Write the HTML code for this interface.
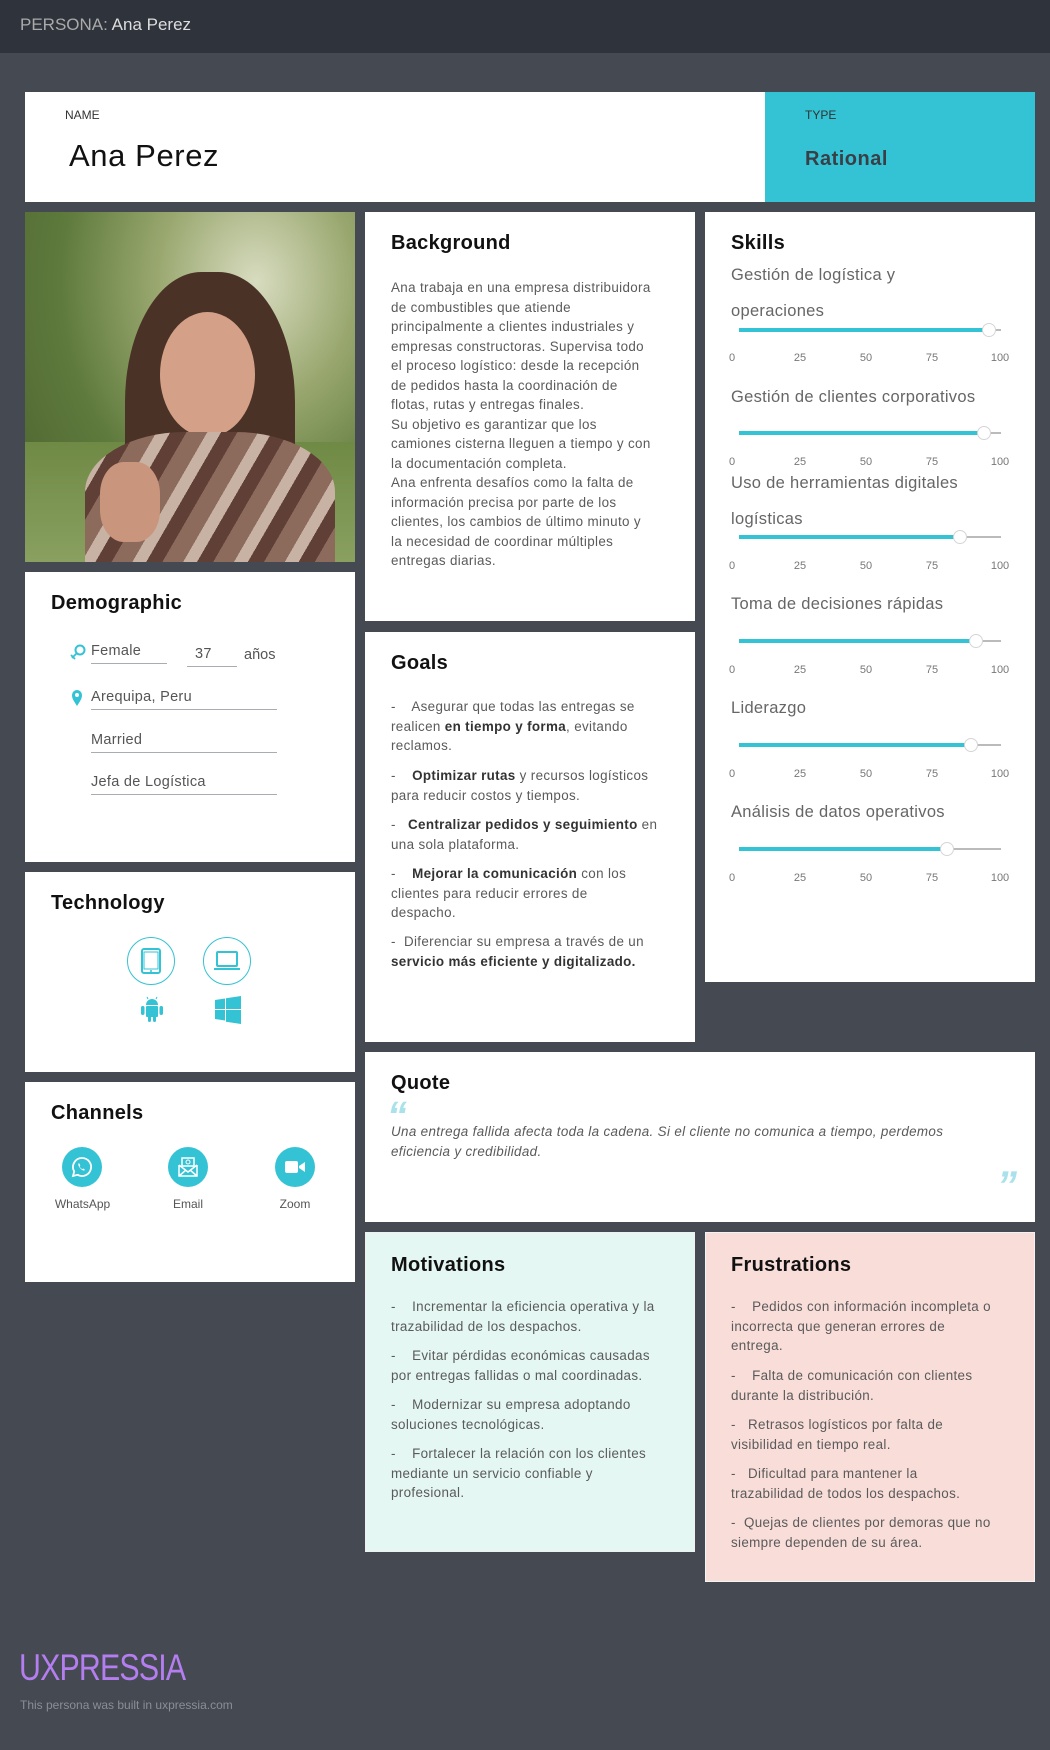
<!DOCTYPE html>
<html><head><meta charset="utf-8"><style>
*{margin:0;padding:0;box-sizing:border-box}
body{width:1050px;height:1750px;background:#454952;font-family:"Liberation Sans",sans-serif;position:relative;overflow:hidden;color:#555}
.a{position:absolute}
.card{position:absolute;background:#fff}
.t{position:absolute;font-size:20px;font-weight:bold;color:#111;left:26px;top:20px;letter-spacing:0.3px}
.p{position:absolute;font-size:13.4px;line-height:19.5px;color:#5a5a5a;letter-spacing:0.35px;white-space:nowrap}
.p b{color:#333}
.sl{position:absolute;font-size:16.5px;color:#666;left:26px;letter-spacing:0.3px}
.bar{position:absolute;left:34px;width:262px;height:2px;background:#bbb}
.bar i{position:absolute;left:0;top:-1px;height:4px;background:#33c3d4}
.bar s{position:absolute;top:-6px;width:14px;height:14px;margin-left:-7px;border-radius:50%;background:#fff;border:1px solid #d5d5d5}
.tk{position:absolute;left:0;width:330px;font-size:11px;color:#777}
.tk span{position:absolute;transform:translateX(-50%)}
.dl{position:absolute;font-size:14.5px;color:#555;border-bottom:1px solid #a9adb3;padding-bottom:4px;letter-spacing:0.3px}
.q{position:absolute;font-size:40px;font-weight:bold;font-style:italic;color:#a9e2ea;line-height:40px}
</style></head><body>
<div class="a" style="left:0;top:0;width:1050px;height:53px;background:#2f333c"></div>
<div class="a" style="left:20px;top:15px;font-size:17px;color:#ddd"><span style="color:#aaa">PERSONA:</span> Ana Perez</div>

<div class="card" style="left:25px;top:92px;width:740px;height:110px"></div>
<div class="a" style="left:765px;top:92px;width:270px;height:110px;background:#33c3d4"></div>
<div class="a" style="left:65px;top:108px;font-size:12px;color:#333">NAME</div>
<div class="a" style="left:69px;top:138px;font-size:31px;color:#111;letter-spacing:0.6px">Ana Perez</div>
<div class="a" style="left:805px;top:108px;font-size:12px;color:#333">TYPE</div>
<div class="a" style="left:805px;top:148px;font-size:20px;font-weight:bold;color:#3a3f47;letter-spacing:0.5px">Rational</div>

<!-- photo -->
<div class="a" style="left:25px;top:212px;width:330px;height:350px;overflow:hidden;background:radial-gradient(ellipse at 70% 20%,#d8dcc0 0,#9aa870 30%,#5e7a3c 60%,#4a5f2e 100%)">
<div class="a" style="left:0;top:230px;width:330px;height:120px;background:linear-gradient(#6f8a45,#89a060)"></div>
<div class="a" style="left:100px;top:60px;width:170px;height:290px;border-radius:45% 45% 20% 20%;background:#4a3226"></div>
<div class="a" style="left:135px;top:100px;width:95px;height:125px;border-radius:50%;background:#d4a088"></div>
<div class="a" style="left:60px;top:220px;width:250px;height:150px;border-radius:40% 40% 0 0;background:repeating-linear-gradient(120deg,#8c6a5c 0 18px,#c7b2a4 18px 30px,#5f3f36 30px 44px)"></div>
<div class="a" style="left:75px;top:250px;width:60px;height:80px;border-radius:40%;background:#c9957c"></div>
</div>

<!-- Background -->
<div class="card" style="left:365px;top:212px;width:330px;height:409px">
<div class="t">Background</div>
<div class="p" style="left:26px;top:66px">Ana trabaja en una empresa distribuidora<br>de combustibles que atiende<br>principalmente a clientes industriales y<br>empresas constructoras. Supervisa todo<br>el proceso logístico: desde la recepción<br>de pedidos hasta la coordinación de<br>flotas, rutas y entregas finales.<br>Su objetivo es garantizar que los<br>camiones cisterna lleguen a tiempo y con<br>la documentación completa.<br>Ana enfrenta desafíos como la falta de<br>información precisa por parte de los<br>clientes, los cambios de último minuto y<br>la necesidad de coordinar múltiples<br>entregas diarias.</div>
</div>

<!-- Skills -->
<div class="card" style="left:705px;top:212px;width:330px;height:770px">
<div class="t">Skills</div>
<div class="sl" style="top:54px">Gestión de logística y</div>
<div class="sl" style="top:90px">operaciones</div>
<div class="bar" style="top:117px"><i style="width:250px"></i><s style="left:250px"></s></div>
<div class="tk" style="top:140px"><span style="left:27px">0</span><span style="left:95px">25</span><span style="left:161px">50</span><span style="left:227px">75</span><span style="left:295px">100</span></div>
<div class="sl" style="top:176px">Gestión de clientes corporativos</div>
<div class="bar" style="top:220px"><i style="width:245px"></i><s style="left:245px"></s></div>
<div class="tk" style="top:244px"><span style="left:27px">0</span><span style="left:95px">25</span><span style="left:161px">50</span><span style="left:227px">75</span><span style="left:295px">100</span></div>
<div class="sl" style="top:262px">Uso de herramientas digitales</div>
<div class="sl" style="top:298px">logísticas</div>
<div class="bar" style="top:324px"><i style="width:221px"></i><s style="left:221px"></s></div>
<div class="tk" style="top:348px"><span style="left:27px">0</span><span style="left:95px">25</span><span style="left:161px">50</span><span style="left:227px">75</span><span style="left:295px">100</span></div>
<div class="sl" style="top:383px">Toma de decisiones rápidas</div>
<div class="bar" style="top:428px"><i style="width:237px"></i><s style="left:237px"></s></div>
<div class="tk" style="top:452px"><span style="left:27px">0</span><span style="left:95px">25</span><span style="left:161px">50</span><span style="left:227px">75</span><span style="left:295px">100</span></div>
<div class="sl" style="top:487px">Liderazgo</div>
<div class="bar" style="top:532px"><i style="width:232px"></i><s style="left:232px"></s></div>
<div class="tk" style="top:556px"><span style="left:27px">0</span><span style="left:95px">25</span><span style="left:161px">50</span><span style="left:227px">75</span><span style="left:295px">100</span></div>
<div class="sl" style="top:591px">Análisis de datos operativos</div>
<div class="bar" style="top:636px"><i style="width:208px"></i><s style="left:208px"></s></div>
<div class="tk" style="top:660px"><span style="left:27px">0</span><span style="left:95px">25</span><span style="left:161px">50</span><span style="left:227px">75</span><span style="left:295px">100</span></div>
</div>

<!-- Demographic -->
<div class="card" style="left:25px;top:572px;width:330px;height:290px">
<div class="t">Demographic</div>
<svg class="a" style="left:45px;top:72px" width="16" height="18" viewBox="0 0 16 18"><circle cx="10" cy="6" r="4.5" fill="none" stroke="#33c3d4" stroke-width="2"/><path d="M7 9L2 14M1 11l4 4" stroke="#33c3d4" stroke-width="1.8"/></svg>
<div class="dl" style="left:66px;top:71px;width:76px">Female</div>
<div class="dl" style="left:162px;top:74px;width:50px;padding-left:8px">37</div>
<div class="a" style="left:219px;top:75px;font-size:14.5px;color:#555">años</div>
<svg class="a" style="left:46px;top:117px" width="12" height="18" viewBox="0 0 12 18"><path d="M6 17C2 11 1 9 1 6a5 5 0 0 1 10 0c0 3-1 5-5 11z" fill="#33c3d4"/><circle cx="6" cy="6" r="2" fill="#fff"/></svg>
<div class="dl" style="left:66px;top:117px;width:186px">Arequipa, Peru</div>
<div class="dl" style="left:66px;top:160px;width:186px">Married</div>
<div class="dl" style="left:66px;top:202px;width:186px">Jefa de Logística</div>
</div>

<!-- Technology -->
<div class="card" style="left:25px;top:872px;width:330px;height:200px">
<div class="t">Technology</div>
<div class="a" style="left:102px;top:65px;width:48px;height:48px;border:1px solid #33c3d4;border-radius:50%"></div>
<svg class="a" style="left:114px;top:76px" width="24" height="26" viewBox="0 0 24 26"><rect x="3" y="1" width="18" height="24" rx="2" fill="none" stroke="#33c3d4" stroke-width="2"/><rect x="5" y="4" width="14" height="17" fill="none" stroke="#33c3d4"/><circle cx="12" cy="23" r="1" fill="#33c3d4"/></svg>
<div class="a" style="left:178px;top:65px;width:48px;height:48px;border:1px solid #33c3d4;border-radius:50%"></div>
<svg class="a" style="left:188px;top:78px" width="28" height="22" viewBox="0 0 28 22"><rect x="4" y="2" width="20" height="14" rx="1" fill="none" stroke="#33c3d4" stroke-width="2"/><path d="M1 18h26v2H1z" fill="#33c3d4"/></svg>
<svg class="a" style="left:115px;top:124px" width="24" height="28" viewBox="0 0 24 28"><path d="M6 9a6 6 0 0 1 12 0z" fill="#33c3d4"/><path d="M8 3L7 1M16 3l1-2" stroke="#33c3d4"/><rect x="6" y="10" width="12" height="11" rx="1" fill="#33c3d4"/><rect x="1" y="10" width="3.5" height="9" rx="1.7" fill="#33c3d4"/><rect x="19.5" y="10" width="3.5" height="9" rx="1.7" fill="#33c3d4"/><rect x="8" y="19" width="3" height="7" rx="1.5" fill="#33c3d4"/><rect x="13" y="19" width="3" height="7" rx="1.5" fill="#33c3d4"/></svg>
<svg class="a" style="left:190px;top:124px" width="26" height="28" viewBox="0 0 26 28"><path d="M0 4l10-1.5V13H0zM11 2.3L26 0v13H11zM0 14h10v10.5L0 23zM11 14h15v14l-15-2.3z" fill="#33c3d4"/></svg>
</div>

<!-- Channels -->
<div class="card" style="left:25px;top:1082px;width:330px;height:200px">
<div class="t">Channels</div>
<div class="a" style="left:37px;top:65px;width:40px;height:40px;border-radius:50%;background:#33c3d4"></div>
<svg class="a" style="left:45px;top:73px" width="24" height="24" viewBox="0 0 24 24"><path d="M12 3a9 9 0 0 0-7.8 13.5L3 21l4.6-1.2A9 9 0 1 0 12 3z" fill="none" stroke="#fff" stroke-width="1.8"/><path d="M9 8c-1 1-1 2.5 1 5s4 3 5 2l-1.5-1.5-1.3.6c-1-.5-2-1.5-2.5-2.5l.6-1.3z" fill="#fff"/></svg>
<div class="a" style="left:143px;top:65px;width:40px;height:40px;border-radius:50%;background:#33c3d4"></div>
<svg class="a" style="left:151px;top:73px" width="24" height="24" viewBox="0 0 24 24"><path d="M6 3h12v8H6z" fill="none" stroke="#fff" stroke-width="1.5"/><path d="M3 10v11h18V10M3 10l9 7 9-7M3 21l7-6M21 21l-7-6" fill="none" stroke="#fff" stroke-width="1.5"/><circle cx="12" cy="7" r="2" fill="none" stroke="#fff"/></svg>
<div class="a" style="left:250px;top:65px;width:40px;height:40px;border-radius:50%;background:#33c3d4"></div>
<svg class="a" style="left:258px;top:75px" width="24" height="20" viewBox="0 0 24 20"><rect x="2" y="4" width="13" height="12" rx="2" fill="#fff"/><path d="M16 9l6-4v10l-6-4z" fill="#fff"/></svg>
<div class="a" style="left:0;top:115px;width:115px;text-align:center;font-size:12px;color:#555">WhatsApp</div>
<div class="a" style="left:123px;top:115px;width:80px;text-align:center;font-size:12px;color:#555">Email</div>
<div class="a" style="left:230px;top:115px;width:80px;text-align:center;font-size:12px;color:#555">Zoom</div>
</div>

<!-- Goals -->
<div class="card" style="left:365px;top:632px;width:330px;height:410px">
<div class="t">Goals</div>
<div class="p" style="left:26px;top:65px">-&nbsp;&nbsp;&nbsp; Asegurar que todas las entregas se<br>realicen <b>en tiempo y forma</b>, evitando<br>reclamos.</div>
<div class="p" style="left:26px;top:134px">-&nbsp;&nbsp;&nbsp; <b>Optimizar rutas</b> y recursos logísticos<br>para reducir costos y tiempos.</div>
<div class="p" style="left:26px;top:183px">-&nbsp;&nbsp; <b>Centralizar pedidos y seguimiento</b> en<br>una sola plataforma.</div>
<div class="p" style="left:26px;top:232px">-&nbsp;&nbsp;&nbsp; <b>Mejorar la comunicación</b> con los<br>clientes para reducir errores de<br>despacho.</div>
<div class="p" style="left:26px;top:300px">-&nbsp; Diferenciar su empresa a través de un<br><b>servicio más eficiente y digitalizado.</b></div>
</div>

<!-- Quote -->
<div class="card" style="left:365px;top:1052px;width:670px;height:170px">
<div class="t">Quote</div>
<div class="q" style="left:22px;top:44px">“</div>
<div class="p" style="left:26px;top:70px;font-style:italic">Una entrega fallida afecta toda la cadena. Si el cliente no comunica a tiempo, perdemos<br>eficiencia y credibilidad.</div>
<div class="q" style="left:632px;top:114px">”</div>
</div>

<!-- Motivations -->
<div class="a" style="left:365px;top:1232px;width:330px;height:320px;background:#e4f7f3;border:1px solid #f0f0f0">
<div class="t" style="left:25px;top:21px">Motivations</div>
<div class="p" style="left:25px;top:64px">-&nbsp;&nbsp;&nbsp; Incrementar la eficiencia operativa y la<br>trazabilidad de los despachos.</div>
<div class="p" style="left:25px;top:113px">-&nbsp;&nbsp;&nbsp; Evitar pérdidas económicas causadas<br>por entregas fallidas o mal coordinadas.</div>
<div class="p" style="left:25px;top:162px">-&nbsp;&nbsp;&nbsp; Modernizar su empresa adoptando<br>soluciones tecnológicas.</div>
<div class="p" style="left:25px;top:211px">-&nbsp;&nbsp;&nbsp; Fortalecer la relación con los clientes<br>mediante un servicio confiable y<br>profesional.</div>
</div>

<!-- Frustrations -->
<div class="a" style="left:705px;top:1232px;width:330px;height:350px;background:#f8ddd9;border:1px solid #f3f3f3">
<div class="t" style="left:25px;top:21px">Frustrations</div>
<div class="p" style="left:25px;top:64px">-&nbsp;&nbsp;&nbsp; Pedidos con información incompleta o<br>incorrecta que generan errores de<br>entrega.</div>
<div class="p" style="left:25px;top:133px">-&nbsp;&nbsp;&nbsp; Falta de comunicación con clientes<br>durante la distribución.</div>
<div class="p" style="left:25px;top:182px">-&nbsp;&nbsp; Retrasos logísticos por falta de<br>visibilidad en tiempo real.</div>
<div class="p" style="left:25px;top:231px">-&nbsp;&nbsp; Dificultad para mantener la<br>trazabilidad de todos los despachos.</div>
<div class="p" style="left:25px;top:280px">-&nbsp; Quejas de clientes por demoras que no<br>siempre dependen de su área.</div>
</div>

<div class="a" style="left:19px;top:1648px;font-size:37px;color:#b57ef0;letter-spacing:-1px;line-height:40px;transform:scaleX(0.82);transform-origin:0 0">UXPRESSIA</div>
<div class="a" style="left:20px;top:1698px;font-size:12px;color:#8a8e96">This persona was built in uxpressia.com</div>
</body></html>
